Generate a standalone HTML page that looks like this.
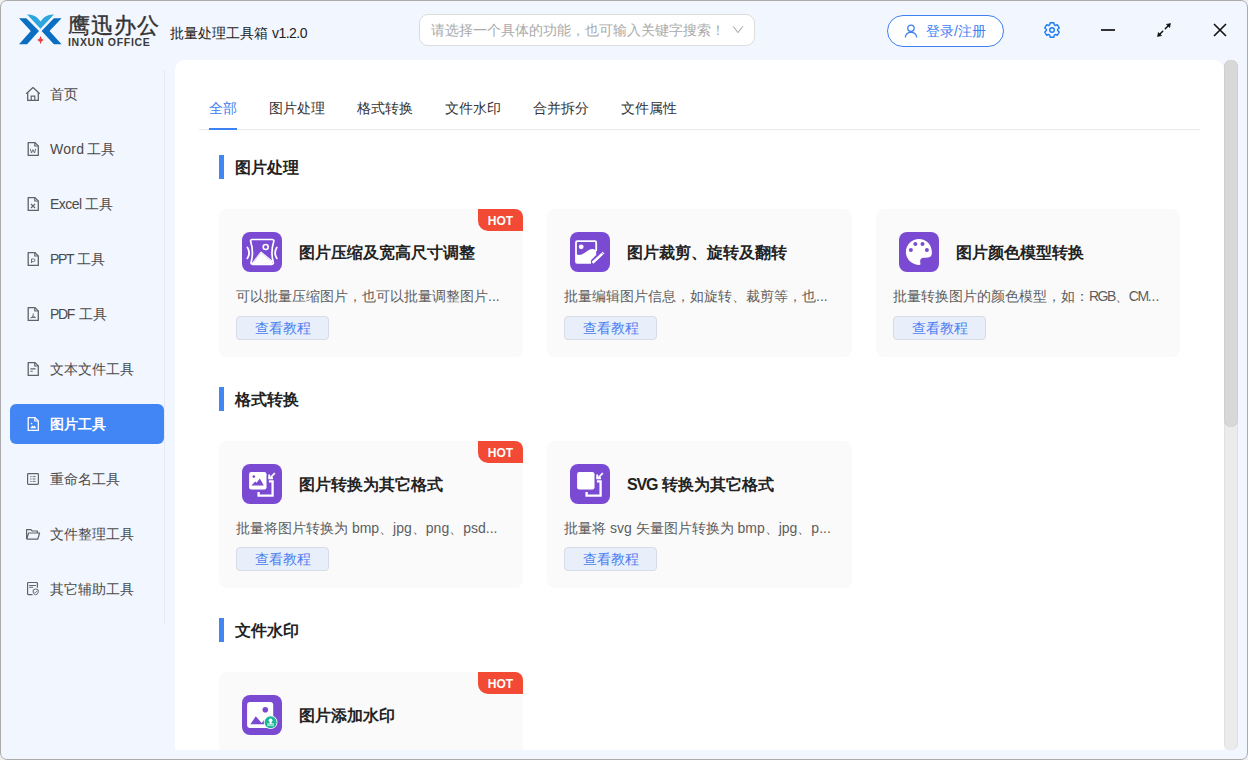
<!DOCTYPE html>
<html><head><meta charset="utf-8">
<style>
*{margin:0;padding:0;box-sizing:border-box}
html,body{width:1248px;height:760px;overflow:hidden;background:#efefef}
body{font-family:"Liberation Sans",sans-serif;position:relative}
.win{position:absolute;left:0;top:0;width:1248px;height:760px;background:#f2f6fe;border-radius:7px;overflow:hidden}
.frame{position:absolute;left:0;top:0;width:1248px;height:760px;border:1px solid #acacac;border-radius:7px;pointer-events:none}
.abs{position:absolute}
.t{position:absolute;white-space:nowrap;line-height:1}
.side-line{position:absolute;left:164px;top:70px;width:1px;height:554px;background:#e6e9ef}
.clip{position:absolute;left:175px;top:60px;width:1049px;height:690px;overflow:hidden;border-radius:10px 10px 0 0}
.inner{position:absolute;left:-175px;top:-60px;width:1248px;height:760px}
.panel{position:absolute;left:175px;top:60px;width:1049px;height:690px;background:#fff;border-radius:10px 10px 0 0}
.scroll-track{position:absolute;left:1224px;top:60px;width:14px;height:690px;background:#ebebeb;border-radius:7px;box-shadow:inset 1px 0 0 #e0e0e0, inset -1px 0 0 #e0e0e0}
.scroll-thumb{position:absolute;left:1224px;top:60px;width:14px;height:367px;background:#d8d8d8;border-radius:7px;box-shadow:inset 1px 0 0 #cfcfcf, inset -1px 0 0 #cfcfcf}
.nav{position:absolute;left:0;width:165px;height:40px}
.nav .ic{position:absolute;left:26px;top:13px}
.nav .lb{position:absolute;left:50px;top:13px;font-size:14px;color:#4a4a4a;line-height:14px;white-space:nowrap}
.nav.act{left:10px;width:154px;background:#4285f4;border-radius:6px}
.nav.act .ic{left:16px}
.nav.act .lb{left:40px;color:#fff;font-weight:bold}
.tab{position:absolute;top:101px;font-size:14px;color:#333;line-height:14px;white-space:nowrap}
.sec-bar{position:absolute;left:219px;width:5px;height:24px;background:#4285f4}
.sec-t{position:absolute;left:235px;font-size:16px;font-weight:bold;color:#222;line-height:16px;white-space:nowrap}
.card{position:absolute;width:305px;height:147px;background:#fafafa;border-radius:8px}
.card .ico{position:absolute;left:23px;top:23px;width:40px;height:40px}
.card .ttl{position:absolute;left:80px;top:36px;font-size:16px;font-weight:bold;color:#222;line-height:16px;white-space:nowrap}
.card .dsc{position:absolute;left:17px;top:80px;font-size:14px;color:#5e5e5e;line-height:14px;white-space:nowrap}
.card .btn{position:absolute;left:17px;top:107px;width:93px;height:24px;background:#e9eefb;border:1px solid #d6dbe4;border-radius:4px;font-size:14px;color:#4a7ff0;line-height:22px;text-align:center}
.card.r2 .btn{top:106px}
.hot{position:absolute;right:0;top:0;width:45px;height:22px;background:#f24a35;border-radius:0 8px 0 10px;color:#fff;font-size:12px;font-weight:bold;line-height:24px;text-align:center}
</style></head><body>
<div class="win">
  <!-- logo -->
  <svg class="abs" style="left:0;top:0" width="64" height="50" viewBox="0 0 64 50">
    <path d="M19 18.2H26.3L39 31L27.1 44.2H19L30.8 31Z" fill="#0a6fc2"/>
    <path d="M61.6 18.2H53.9L41.6 31L53.9 44.2H61.6L49.5 31Z" fill="#0a6fc2"/>
    <path d="M27.1 14.6Q35.5 14 40.5 21.4Q45.5 14 53.9 14.6L40.5 28.8Z" fill="#2ba6df"/>
    <path d="M40.5 35.8L41.6 38.8L43.9 40L41.6 41.2L40.5 44.2L39.4 41.2L37.1 40L39.4 38.8Z" fill="#f23d3d"/>
  </svg>
  <div class="t" style="left:68px;top:15px;font-size:22px;color:#333;font-weight:normal;letter-spacing:1px;-webkit-text-stroke:0.4px #333">鹰迅办公</div>
  <div class="t" style="left:68px;top:37px;font-size:10.5px;color:#3a3a3a;font-weight:bold;letter-spacing:0.7px">INXUN OFFICE</div>
  <div class="t" style="left:170px;top:26px;font-size:14px;color:#222">批量处理工具箱 <span style="letter-spacing:-0.5px">v1.2.0</span></div>

  <!-- search -->
  <div class="abs" style="left:419px;top:14px;width:336px;height:32px;background:#fff;border:1px solid #dcdcdc;border-radius:9px"></div>
  <div class="t" style="left:431px;top:23px;font-size:14px;color:#aaa">请选择一个具体的功能，也可输入关键字搜索！</div>
  <svg class="abs" style="left:732px;top:25px" width="12" height="9" viewBox="0 0 12 9"><path d="M1.2 1.3L6 7.6L10.8 1.3" stroke="#9a9a9a" stroke-width="1" fill="none"/></svg>

  <!-- login -->
  <div class="abs" style="left:887px;top:15px;width:117px;height:32px;background:#fff;border:1px solid #3f80f2;border-radius:16px"></div>
  <svg class="abs" style="left:904px;top:24px" width="14" height="14" viewBox="0 0 14 14"><circle cx="7" cy="4.3" r="3.2" stroke="#3f80f2" stroke-width="1.3" fill="none"/><path d="M1.3 13.5Q1.8 8.3 7 8.3Q12.2 8.3 12.7 13.5" stroke="#3f80f2" stroke-width="1.3" fill="none"/></svg>
  <div class="t" style="left:926px;top:24px;font-size:14px;color:#3f80f2">登录/注册</div>

  <!-- gear -->
  <svg class="abs" style="left:1042px;top:20px" width="20" height="20" viewBox="0 0 20 20"><path d="M12.28 4.88L11.81 2.72L8.19 2.72L7.72 4.88L6.71 5.47L4.60 4.79L2.79 7.93L4.43 9.41L4.43 10.59L2.79 12.07L4.60 15.21L6.71 14.53L7.72 15.12L8.19 17.28L11.81 17.28L12.28 15.12L13.29 14.53L15.40 15.21L17.21 12.07L15.57 10.59L15.57 9.41L17.21 7.93L15.40 4.79L13.29 5.47Z" stroke="#1b7cf4" stroke-width="1.4" fill="none" stroke-linejoin="round"/><circle cx="10" cy="10" r="2.3" stroke="#1b7cf4" stroke-width="1.4" fill="none"/></svg>
  <!-- window controls -->
  <div class="abs" style="left:1101px;top:29px;width:14px;height:2px;background:#333"></div>
  <svg class="abs" style="left:1156px;top:22px" width="16" height="16" viewBox="0 0 16 16"><path d="M9.3 6.7L12.2 3.8M6.7 9.3L3.8 12.2" stroke="#111" stroke-width="1.5" stroke-linecap="round"/><path d="M14.5 1.5L10.4 2.4L13.6 5.6Z" fill="#111" stroke="#111" stroke-width="0.6" stroke-linejoin="round"/><path d="M1.5 14.5L2.4 10.4L5.6 13.6Z" fill="#111" stroke="#111" stroke-width="0.6" stroke-linejoin="round"/></svg>
  <svg class="abs" style="left:1212px;top:22px" width="16" height="16" viewBox="0 0 16 16"><path d="M2 2L14 14M14 2L2 14" stroke="#111" stroke-width="1.6"/></svg>

  <!-- sidebar -->
  <div class="side-line"></div>
  <div class="nav" style="top:74px"><svg class="ic" style="left:25px;top:12px" width="16" height="16" viewBox="0 0 16 16"><path d="M1.2 7.8L8 1.6L14.8 7.8" stroke="#5f6368" stroke-width="1.3" fill="none" stroke-linejoin="round"/><path d="M2.7 6.6V14.4H13.3V6.6" stroke="#5f6368" stroke-width="1.3" fill="none"/><path d="M6.2 14.4V10.2H9.8V14.4" stroke="#5f6368" stroke-width="1.2" fill="none"/></svg><div class="lb">首页</div></div>
  <div class="nav" style="top:129px"><svg class="ic" style="left:25px;top:12px" width="16" height="16" viewBox="0 0 16 16"><path d="M3.2 1.6H10L13.3 4.9V14.4H3.2Z" stroke="#5f6368" stroke-width="1.3" fill="none" stroke-linejoin="round"/><path d="M9.8 1.6V5H13.3" stroke="#5f6368" stroke-width="1.2" fill="none"/><path d="M5.3 7.8L6.5 12L8 8.6L9.5 12L10.7 7.8" stroke="#5f6368" stroke-width="0.9" fill="none"/></svg><div class="lb"><span style="letter-spacing:0.3px">Word</span><span style="display:inline-block;width:2.9px"></span>工具</div></div>
  <div class="nav" style="top:184px"><svg class="ic" style="left:25px;top:12px" width="16" height="16" viewBox="0 0 16 16"><path d="M3.2 1.6H10L13.3 4.9V14.4H3.2Z" stroke="#5f6368" stroke-width="1.3" fill="none" stroke-linejoin="round"/><path d="M9.8 1.6V5H13.3" stroke="#5f6368" stroke-width="1.2" fill="none"/><path d="M6 8L10 12M10 8L6 12" stroke="#5f6368" stroke-width="1.1" fill="none"/></svg><div class="lb"><span style="letter-spacing:-0.5px">Excel </span>工具</div></div>
  <div class="nav" style="top:239px"><svg class="ic" style="left:25px;top:12px" width="16" height="16" viewBox="0 0 16 16"><path d="M3.2 1.6H10L13.3 4.9V14.4H3.2Z" stroke="#5f6368" stroke-width="1.3" fill="none" stroke-linejoin="round"/><path d="M9.8 1.6V5H13.3" stroke="#5f6368" stroke-width="1.2" fill="none"/><path d="M6.5 12V8H8.6Q10 8 10 9.3Q10 10.6 8.6 10.6H6.5" stroke="#5f6368" stroke-width="0.9" fill="none"/></svg><div class="lb"><span style="letter-spacing:-1.4px">PPT</span><span style="display:inline-block;width:4.2px"></span>工具</div></div>
  <div class="nav" style="top:294px"><svg class="ic" style="left:25px;top:12px" width="16" height="16" viewBox="0 0 16 16"><path d="M3.2 1.6H10L13.3 4.9V14.4H3.2Z" stroke="#5f6368" stroke-width="1.3" fill="none" stroke-linejoin="round"/><path d="M9.8 1.6V5H13.3" stroke="#5f6368" stroke-width="1.2" fill="none"/><path d="M8.3 7.5L8 9.8L5.8 12.4M8 9.8L10.5 11.6M5.8 11.5H10.5" stroke="#5f6368" stroke-width="0.9" fill="none"/></svg><div class="lb"><span style="letter-spacing:-1.3px">PDF</span><span style="display:inline-block;width:4.9px"></span>工具</div></div>
  <div class="nav" style="top:349px"><svg class="ic" style="left:25px;top:12px" width="16" height="16" viewBox="0 0 16 16"><path d="M3.2 1.6H10L13.3 4.9V14.4H3.2Z" stroke="#5f6368" stroke-width="1.3" fill="none" stroke-linejoin="round"/><path d="M9.8 1.6V5H13.3" stroke="#5f6368" stroke-width="1.2" fill="none"/><path d="M5.4 7.9H10.6M5.4 10.2H7.7" stroke="#5f6368" stroke-width="1.1" fill="none"/></svg><div class="lb">文本文件工具</div></div>
  <div class="nav act" style="top:404px"><svg class="ic" style="left:15px;top:12px" width="16" height="16" viewBox="0 0 16 16"><path d="M3.2 1.6H10L13.3 4.9V14.4H3.2Z" stroke="#fff" stroke-width="1.3" fill="none" stroke-linejoin="round"/><path d="M9.8 1.6V5H13.3" stroke="#fff" stroke-width="1.2" fill="none"/><circle cx="6.6" cy="7.6" r="0.8" fill="#fff"/><path d="M5.2 12.2L7.4 9.6L8.6 10.8L9.6 9.4L11.2 12.2Z" fill="#fff"/></svg><div class="lb">图片工具</div></div>
  <div class="nav" style="top:459px"><svg class="ic" style="left:25px;top:12px" width="16" height="16" viewBox="0 0 16 16"><rect x="2.6" y="2.6" width="10.8" height="10.8" rx="0.8" stroke="#5f6368" stroke-width="1.2" fill="none"/><path d="M5.2 5.6H6.6M7.6 5.6H10.6M5.2 8H6.6M7.6 8H10.6M5.2 10.4H6.6M7.6 10.4H10.6" stroke="#5f6368" stroke-width="0.9"/></svg><div class="lb">重命名工具</div></div>
  <div class="nav" style="top:514px"><svg class="ic" style="left:25px;top:12px" width="16" height="16" viewBox="0 0 16 16"><path d="M1.6 13.1V3.6H5.9L7.3 5H12.4V6.9" stroke="#5f6368" stroke-width="1.2" fill="none" stroke-linejoin="round"/><path d="M1.6 13.1H12.8L14.6 7H3.6L1.8 12.8" stroke="#5f6368" stroke-width="1.2" fill="none" stroke-linejoin="round"/></svg><div class="lb">文件整理工具</div></div>
  <div class="nav" style="top:569px"><svg class="ic" style="left:25px;top:12px" width="16" height="16" viewBox="0 0 16 16"><path d="M7.6 13.6H3.4Q2.6 13.6 2.6 12.8V2.3Q2.6 1.5 3.4 1.5H11.6Q12.4 1.5 12.4 2.3V6.8" stroke="#5f6368" stroke-width="1.2" fill="none"/><path d="M4.6 4.5H10.5M4.6 6.3H7.7" stroke="#5f6368" stroke-width="1" stroke-linecap="round"/><path d="M8.2 8.9L10.7 7.9L13.2 8.9V11.2Q13.2 12.9 10.7 13.8Q8.2 12.9 8.2 11.2Z" stroke="#5f6368" stroke-width="1" fill="none" stroke-linejoin="round"/><path d="M9.5 10.9L10.4 11.8L11.9 10.1" stroke="#5f6368" stroke-width="0.9" fill="none"/></svg><div class="lb">其它辅助工具</div></div>

  <!-- panel -->
  <div class="panel"></div>
  <div class="scroll-track"></div>
  <div class="scroll-thumb"></div>

  <div class="clip"><div class="inner">
  <!-- tabs -->
  <div class="tab" style="left:209px;color:#3f80f2">全部</div>
  <div class="tab" style="left:269px">图片处理</div>
  <div class="tab" style="left:357px">格式转换</div>
  <div class="tab" style="left:445px">文件水印</div>
  <div class="tab" style="left:533px">合并拆分</div>
  <div class="tab" style="left:621px">文件属性</div>
  <div class="abs" style="left:199px;top:129px;width:1001px;height:1px;background:#ebebeb"></div>
  <div class="abs" style="left:209px;top:128px;width:28px;height:2px;background:#3f80f2"></div>

  <!-- sections -->
  <div class="sec-bar" style="top:155px"></div>
  <div class="sec-t" style="top:160px">图片处理</div>
  <div class="sec-bar" style="top:387px"></div>
  <div class="sec-t" style="top:392px">格式转换</div>
  <div class="sec-bar" style="top:618px"></div>
  <div class="sec-t" style="top:623px">文件水印</div>

  <div class="card" style="left:219px;top:209px;height:148px;width:304px"><svg class="ico" width="40" height="40" viewBox="0 0 40 40"><rect width="40" height="40" rx="8" fill="#7a4ad3"/><path d="M10.2 7.5H30.2Q32.1 7.5 31.8 9.3Q28.4 20 31.3 30.4Q31.7 32.3 29.8 32.3H10.6Q8.7 32.3 9.1 30.4Q12 20 8.6 9.3Q8.3 7.5 10.2 7.5Z" stroke="#fff" stroke-width="1.7" fill="none" stroke-linejoin="round"/><circle cx="23.7" cy="15" r="2.5" stroke="#fff" stroke-width="1.6" fill="none"/><path d="M10.2 30.6L18.3 20Q19 19.2 19.8 19.9L30.2 28.6L30.6 32.3H9.8Z" fill="#fff"/><path d="M11.6 30.4L18.6 21.2Q19 20.7 19.5 21.1L28.8 28.8" stroke="#7a4ad3" stroke-width="0.45" fill="none" opacity="0.5"/><path d="M5.4 15.4Q8.8 20.9 5.4 26.4" stroke="#fff" stroke-width="1.8" fill="none" stroke-linecap="round"/><path d="M34.8 15.4Q31.4 20.9 34.8 26.4" stroke="#fff" stroke-width="1.8" fill="none" stroke-linecap="round"/></svg><div class="ttl">图片压缩及宽高尺寸调整</div><div class="dsc">可以批量压缩图片，也可以批量调整图片...</div><div class="btn">查看教程</div><div class="hot">HOT</div></div>
  <div class="card" style="left:547px;top:209px;height:148px"><svg class="ico" width="40" height="40" viewBox="0 0 40 40"><rect width="40" height="40" rx="8" fill="#7a4ad3"/><path d="M21 30.9H7.2Q6 30.9 6 29.7V10.4Q6 9.2 7.2 9.2H25Q26.2 9.2 26.2 10.4V19" stroke="#fff" stroke-width="1.8" fill="none"/><circle cx="11.2" cy="14.8" r="2.4" fill="#fff"/><path d="M6 21.8Q8.6 23.8 11.6 22.6Q14.6 21.2 17.6 18.8Q20.2 16.9 22.6 17.1Q24.8 17.4 26.2 18.9V23L21 28.2L20.8 30.9H6Z" fill="#fff"/><path d="M21.55 29.77L23.45 31.83L34.55 21.63L32.65 19.57Z" fill="#fff" stroke="#7a4ad3" stroke-width="1" stroke-linejoin="round"/><path d="M21.7 29.9L23.3 31.7L34.4 21.5L32.8 19.7Z" fill="#fff"/><path d="M31.5 20.6L33.5 22.7" stroke="#7a4ad3" stroke-width="0.7"/></svg><div class="ttl">图片裁剪、旋转及翻转</div><div class="dsc">批量编辑图片信息，如旋转、裁剪等，也...</div><div class="btn">查看教程</div></div>
  <div class="card" style="left:876px;top:209px;height:148px;width:304px"><svg class="ico" width="40" height="40" viewBox="0 0 40 40"><rect width="40" height="40" rx="8" fill="#7a4ad3"/><path d="M20 6.9C12.8 6.9 6.9 12.8 6.9 20C6.9 27.2 12.8 32.9 20.4 32.9Q21.6 32.9 21.4 31.6Q20.8 28.6 21.6 27.2Q22.8 25.6 25.8 25.8Q29.4 26 31.6 24.4Q33 23.2 32.9 20C32.9 12.8 27.2 6.9 20 6.9Z" fill="#fff"/><circle cx="16.3" cy="12.1" r="2" fill="#7a4ad3"/><circle cx="23.5" cy="12.1" r="2" fill="#7a4ad3"/><circle cx="11.9" cy="17.9" r="2" fill="#7a4ad3"/><circle cx="27.9" cy="17.9" r="2" fill="#7a4ad3"/></svg><div class="ttl">图片颜色模型转换</div><div class="dsc">批量转换图片的颜色模型，如：<span style="letter-spacing:-1.5px">RGB</span>、<span style="letter-spacing:-1.5px">CM</span>...</div><div class="btn">查看教程</div></div>
  <div class="card r2" style="left:219px;top:441px;width:304px"><svg class="ico" width="40" height="40" viewBox="0 0 40 40"><rect width="40" height="40" rx="8" fill="#7a4ad3"/><rect x="7.1" y="8.1" width="17.4" height="17.4" rx="2.2" fill="#fff"/><circle cx="11.8" cy="12.6" r="1.3" fill="#7a4ad3"/><path d="M9.4 21.6L13.2 17.4L14.6 18.8L17.8 14.6L21.8 21.6Z" fill="#7a4ad3"/><path d="M16.6 27.9V31.7H30.6V17.3H26.9" stroke="#fff" stroke-width="2.3" fill="none" stroke-linejoin="miter"/><path d="M32.8 9.2L28.2 13.8" stroke="#fff" stroke-width="1.7" fill="none"/><path d="M27.2 10.4V14.2H31" stroke="#fff" stroke-width="1.9" fill="none"/></svg><div class="ttl">图片转换为其它格式</div><div class="dsc">批量将图片转换为 bmp、jpg、png、psd...</div><div class="btn">查看教程</div><div class="hot">HOT</div></div>
  <div class="card r2" style="left:547px;top:441px"><svg class="ico" width="40" height="40" viewBox="0 0 40 40"><rect width="40" height="40" rx="8" fill="#7a4ad3"/><rect x="7.1" y="8.1" width="17.4" height="17.4" rx="2.2" fill="#fff"/><path d="M16.6 27.9V31.7H30.6V17.3H26.9" stroke="#fff" stroke-width="2.3" fill="none" stroke-linejoin="miter"/><path d="M32.8 9.2L28.2 13.8" stroke="#fff" stroke-width="1.7" fill="none"/><path d="M27.2 10.4V14.2H31" stroke="#fff" stroke-width="1.9" fill="none"/></svg><div class="ttl"><span style="letter-spacing:-1.2px">SVG</span> 转换为其它格式</div><div class="dsc">批量将 svg 矢量图片转换为 bmp、jpg、p...</div><div class="btn">查看教程</div></div>
  <div class="card" style="left:219px;top:672px;width:304px"><svg class="ico" width="40" height="40" viewBox="0 0 40 40"><rect width="40" height="40" rx="8" fill="#7a4ad3"/><rect x="5.1" y="7.1" width="26.1" height="26" rx="3" fill="#fff"/><circle cx="23.3" cy="14.8" r="2.8" fill="#7a4ad3"/><path d="M8.4 29.2L13.8 21.2L19.6 28L22.6 24.6L27 29.2Z" fill="#7a4ad3"/><circle cx="28.6" cy="27.2" r="6.8" fill="#fff"/><circle cx="28.6" cy="27.2" r="6" fill="#18b797"/><circle cx="28.6" cy="25.3" r="1.9" fill="#fff"/><path d="M27.7 26.4H29.5V28.4H32V29.6H25.2V28.4H27.7Z" fill="#fff"/><path d="M25.2 30.6H32" stroke="#fff" stroke-width="0.6"/></svg><div class="ttl">图片添加水印</div><div class="hot">HOT</div></div>
</div></div>
</div>
<div class="frame"></div>
</body></html>
